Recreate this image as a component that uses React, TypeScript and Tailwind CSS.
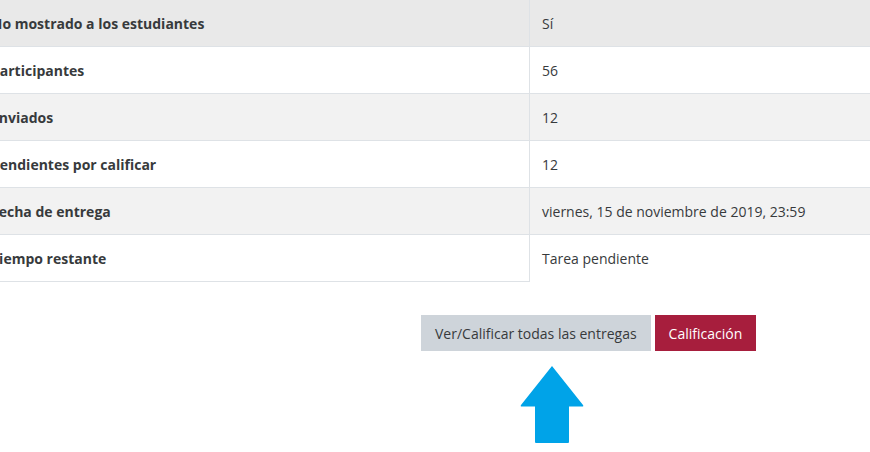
import React from 'react';

type Row = { label: string; value: string; bg: string };

const rows: Row[] = [
  { label: 'No mostrado a los estudiantes', value: 'Sí', bg: 'bg-[#e9e9e9]' },
  { label: 'Participantes', value: '56', bg: 'bg-white' },
  { label: 'Enviados', value: '12', bg: 'bg-[#f2f2f2]' },
  { label: 'Pendientes por calificar', value: '12', bg: 'bg-white' },
  { label: 'Fecha de entrega', value: 'viernes, 15 de noviembre de 2019, 23:59', bg: 'bg-[#f2f2f2]' },
  { label: 'Tiempo restante', value: 'Tarea pendiente', bg: 'bg-white' },
];

const ArrowUp = () => (
  <svg width="64" height="78" viewBox="0 0 64 78" className="block">
    <path
      d="M32 0 L63 39 Q64 40.5 62 40.5 L49 40.5 L49 76 Q49 77 48 77 L16 77 Q15 77 15 76 L15 40.5 L2 40.5 Q0 40.5 1 39 Z"
      fill="#00a3e8"
    />
  </svg>
);

export default function App() {
  return (
    <div
      className="w-[870px] h-[452px] overflow-hidden bg-white text-[14px] text-[#373a3c]"
      style={{ fontFamily: '"Open Sans", "Noto Sans", sans-serif' }}
    >
      {/* summary table, scrolled a little to the right so the labels are clipped */}
      <div className="ml-[-21px] flex flex-col">
        {rows.map((r, i) => (
          <div key={i} className={`flex h-[47px] ${r.bg}`}>
            <div className="w-[551px] shrink-0 flex items-center px-3 font-bold whitespace-nowrap border-r border-b border-[#dee2e6]">
              {r.label}
            </div>
            <div className={`flex-1 flex items-center px-3 ${i < rows.length - 1 ? 'border-b border-[#dee2e6]' : ''}`}>
              {r.value}
            </div>
          </div>
        ))}
      </div>

      {/* actions */}
      <div className="flex gap-1 pl-[421px] mt-[33px]">
        <button className="h-[36px] px-[14px] bg-[#ced4da] text-[#373a3c]">Ver/Calificar todas las entregas</button>
        <button className="h-[36px] px-[14px] bg-[#a71e3d] text-white">Calificación</button>
      </div>

      <div className="pl-[520px] mt-[15px]">
        <ArrowUp />
      </div>
    </div>
  );
}
